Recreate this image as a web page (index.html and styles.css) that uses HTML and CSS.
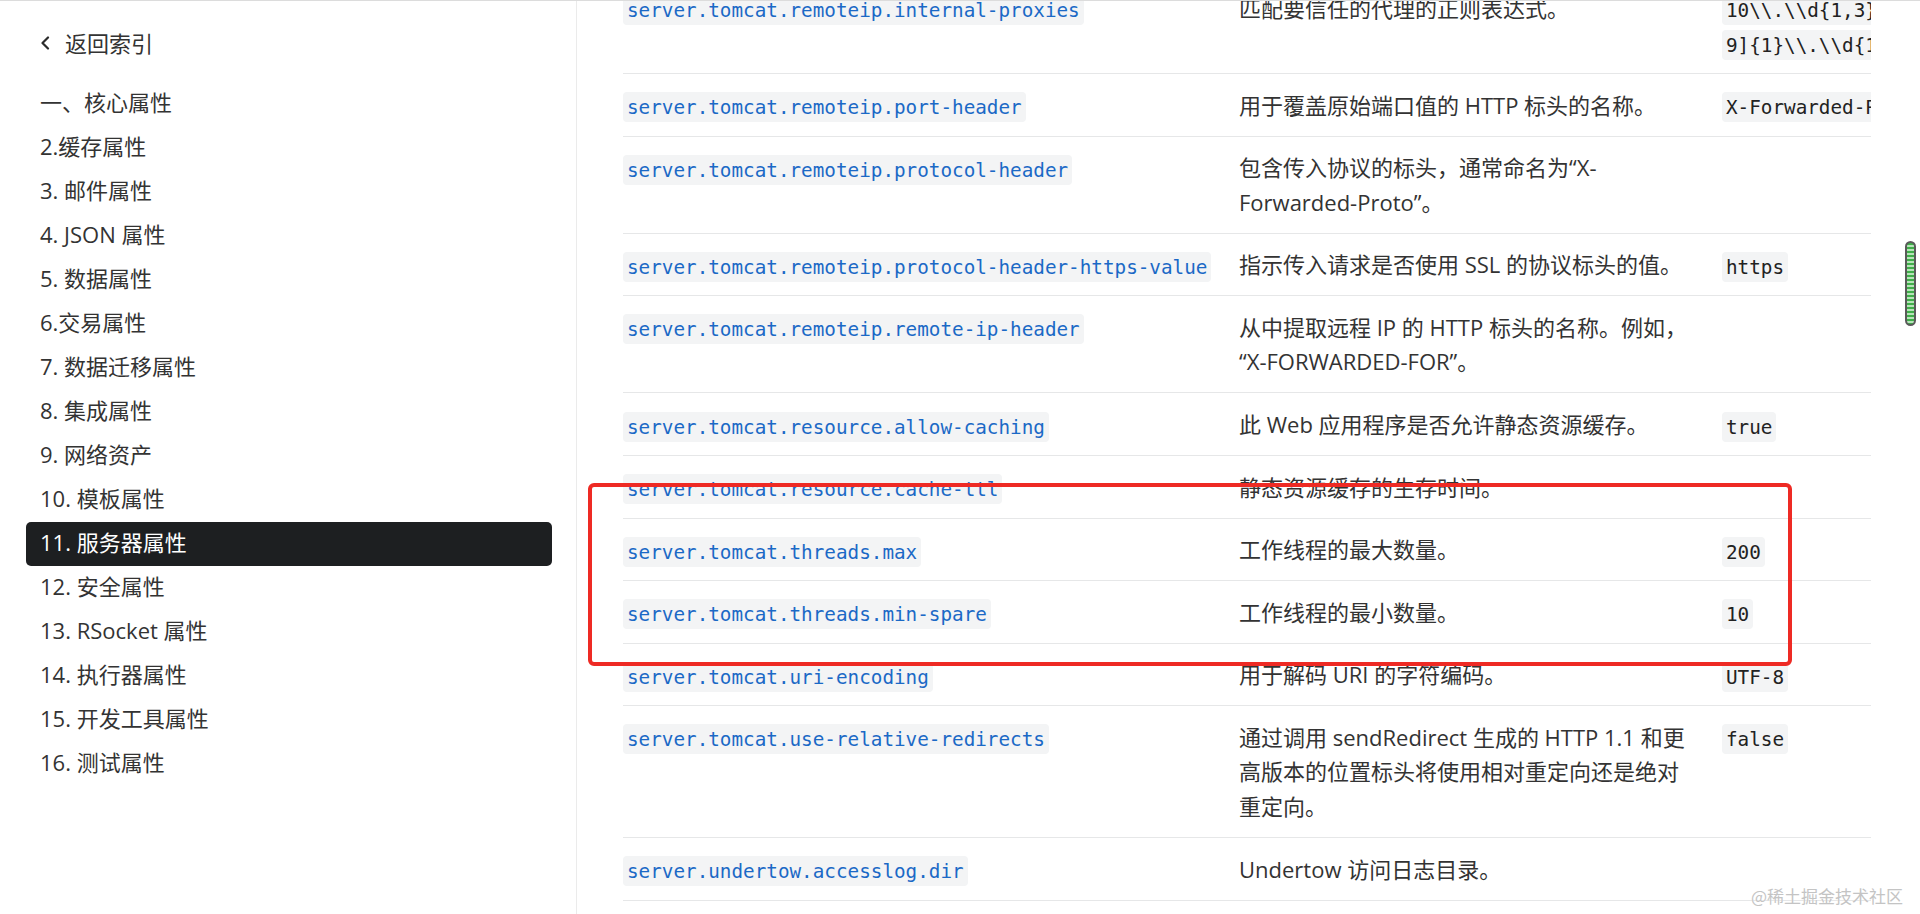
FILE: index.html
```html
<!DOCTYPE html>
<html lang="zh-CN">
<head>
<meta charset="utf-8">
<title>11. 服务器属性</title>
<link rel="stylesheet" href="styles.css">
</head>
<body>
<div class="page">
  <aside class="sidebar">
    <a class="back" href="#">
      <svg class="chev" viewBox="0 0 10 14" aria-hidden="true"><polyline points="8,1.5 2.5,7 8,12.5"/></svg>
      <span>返回索引</span>
    </a>
    <ul class="toc">
      <li>一、核心属性</li>
      <li>2.缓存属性</li>
      <li>3. 邮件属性</li>
      <li>4. JSON 属性</li>
      <li>5. 数据属性</li>
      <li>6.交易属性</li>
      <li>7. 数据迁移属性</li>
      <li>8. 集成属性</li>
      <li>9. 网络资产</li>
      <li>10. 模板属性</li>
      <li class="active">11. 服务器属性</li>
      <li>12. 安全属性</li>
      <li>13. RSocket 属性</li>
      <li>14. 执行器属性</li>
      <li>15. 开发工具属性</li>
      <li>16. 测试属性</li>
    </ul>
  </aside>
  <main class="content">
    <div class="table-wrap">
      <table class="props">
        <colgroup><col class="c-name"><col class="c-desc"><col class="c-def"></colgroup>
        <tbody>
          <tr>
            <td class="name"><code>server.tomcat.remoteip.internal-proxies</code></td>
            <td class="desc">匹配要信任的代理的正则表达式。</td>
            <td class="def nowrap"><code>10\\.\\d{1,3}\\.\\d{1,3}\\.\\d{1,3}|192\\.168\\.\\d{1,3}\\.\\d{1,3}|169\\.254\\.\\d{1,3}\\.\\d{1,3}|127\\.\\d{1,3}\\.\\d{1,3}\\.\\d{1,3}|172\\.1[6-9]{1}\\.\\d{1,3}\\.\\d{1,3}|172\\.2[0-</code><br><code>9]{1}\\.\\d{1,3}\\.\\d{1,3}|172\\.3[0-1]{1}\\.\\d{1,3}\\.\\d{1,3}|0:0:0:0:0:0:0:1|::1</code></td>
          </tr>
          <tr>
            <td class="name"><code>server.tomcat.remoteip.port-header</code></td>
            <td class="desc">用于覆盖原始端口值的 HTTP 标头的名称。</td>
            <td class="def nowrap"><code>X-Forwarded-Port</code></td>
          </tr>
          <tr>
            <td class="name"><code>server.tomcat.remoteip.protocol-header</code></td>
            <td class="desc">包含传入协议的标头，通常命名为“X-Forwarded-Proto”。</td>
            <td class="def"></td>
          </tr>
          <tr>
            <td class="name"><code>server.tomcat.remoteip.protocol-header-https-value</code></td>
            <td class="desc">指示传入请求是否使用 SSL 的协议标头的值。</td>
            <td class="def"><code>https</code></td>
          </tr>
          <tr>
            <td class="name"><code>server.tomcat.remoteip.remote-ip-header</code></td>
            <td class="desc">从中提取远程 IP 的 HTTP 标头的名称。例如，“X-FORWARDED-FOR”。</td>
            <td class="def"></td>
          </tr>
          <tr>
            <td class="name"><code>server.tomcat.resource.allow-caching</code></td>
            <td class="desc">此 Web 应用程序是否允许静态资源缓存。</td>
            <td class="def"><code>true</code></td>
          </tr>
          <tr>
            <td class="name"><code>server.tomcat.resource.cache-ttl</code></td>
            <td class="desc">静态资源缓存的生存时间。</td>
            <td class="def"></td>
          </tr>
          <tr>
            <td class="name"><code>server.tomcat.threads.max</code></td>
            <td class="desc">工作线程的最大数量。</td>
            <td class="def"><code>200</code></td>
          </tr>
          <tr>
            <td class="name"><code>server.tomcat.threads.min-spare</code></td>
            <td class="desc">工作线程的最小数量。</td>
            <td class="def"><code>10</code></td>
          </tr>
          <tr>
            <td class="name"><code>server.tomcat.uri-encoding</code></td>
            <td class="desc">用于解码 URI 的字符编码。</td>
            <td class="def"><code>UTF-8</code></td>
          </tr>
          <tr>
            <td class="name"><code>server.tomcat.use-relative-redirects</code></td>
            <td class="desc">通过调用 sendRedirect 生成的 HTTP 1.1 和更高版本的位置标头将使用相对重定向还是绝对重定向。</td>
            <td class="def"><code>false</code></td>
          </tr>
          <tr>
            <td class="name"><code>server.undertow.accesslog.dir</code></td>
            <td class="desc">Undertow 访问日志目录。</td>
            <td class="def"></td>
          </tr>
          <tr>
            <td class="name"><code>server.undertow.accesslog.enabled</code></td>
            <td class="desc">是否启用 Undertow 访问日志。</td>
            <td class="def"><code>false</code></td>
          </tr>
        </tbody>
      </table>
    </div>
  </main>
</div>
<div class="highlight-box"></div>
<div class="scroll-thumb"></div>
<div class="watermark">@稀土掘金技术社区</div>
</body>
</html>
```
FILE: styles.css
```css
html, body {
  margin: 0;
  padding: 0;
}

body {
  height: 914px;
  overflow: hidden;
  box-sizing: border-box;
  border-top: 1px solid #dcdcdc;
  background: #fff;
  color: #333;
  font-family: "Open Sans", "Noto Sans CJK SC", sans-serif;
}

.page {
  display: flex;
  height: 913px;
}

/* ---------- sidebar ---------- */
.sidebar {
  flex: 0 0 577px;
  box-sizing: border-box;
  border-right: 1px solid #ebebeb;
  padding: 21px 24px 0 26px;
}

.back {
  display: flex;
  align-items: center;
  gap: 15px;
  box-sizing: border-box;
  height: 44px;
  padding: 0 0 5px 14px;
  font-size: 22px;
  color: #333;
  text-decoration: none;
}

.chev {
  width: 10px;
  height: 14px;
  flex: none;
  margin-top: 3px;
}

.chev polyline {
  fill: none;
  stroke: #2b2b2b;
  stroke-width: 2.2;
  stroke-linecap: round;
  stroke-linejoin: round;
}

.toc {
  list-style: none;
  margin: 16px 0 0;
  padding: 0;
}

.toc li {
  display: flex;
  align-items: center;
  box-sizing: border-box;
  height: 44px;
  padding: 0 0 6px 14px;
  border-radius: 5px;
  font-size: 22px;
  color: #333;
}

.toc li.active {
  background: #1d1f21;
  color: #fff;
}

/* ---------- content ---------- */
.content {
  flex: 1;
  min-width: 0;
  overflow: hidden;
  padding-left: 46px;
}

.table-wrap {
  width: 1248px;
  overflow: hidden;
  margin-top: -24px;
}

.props {
  border-collapse: collapse;
  table-layout: fixed;
  width: 1650px;
  font-size: 22px;
  line-height: 34.5px;
  color: #333;
}

.c-name { width: 616px; }
.c-desc { width: 483px; }
.c-def  { width: 551px; }

.props td {
  padding: 13.55px 0;
  border-bottom: 1px solid #e6e7e8;
  vertical-align: top;
  text-align: left;
}

.props td.desc {
  padding-right: 33px;
}

.props td.nowrap {
  white-space: nowrap;
}

code {
  font-family: "DejaVu Sans Mono", monospace;
  font-size: 19.3px;
  line-height: 1;
  padding: 3.5px 4px;
  border-radius: 4px;
  background: #f3f4f5;
}

.name code {
  color: #1b69c6;
}

.def code {
  color: #222;
}

/* ---------- overlays ---------- */
.highlight-box {
  position: absolute;
  left: 588px;
  top: 483px;
  width: 1204px;
  height: 183px;
  box-sizing: border-box;
  border: 4.5px solid #ee2a24;
  border-radius: 6px;
  pointer-events: none;
}

.scroll-thumb {
  position: absolute;
  left: 1905px;
  top: 241px;
  width: 11px;
  height: 85px;
  box-sizing: border-box;
  border: 2px solid #5a5a5a;
  border-radius: 6px;
  background: repeating-linear-gradient(to bottom, #3fae49 0 2px, #b6e3b8 2px 4px);
}

.watermark {
  position: absolute;
  left: 1751px;
  top: 885px;
  font-family: "Noto Sans CJK SC", sans-serif;
  font-size: 17px;
  line-height: 22px;
  color: #c4c4c4;
  text-shadow: 0 0 1px #fff;
  white-space: nowrap;
}
```
